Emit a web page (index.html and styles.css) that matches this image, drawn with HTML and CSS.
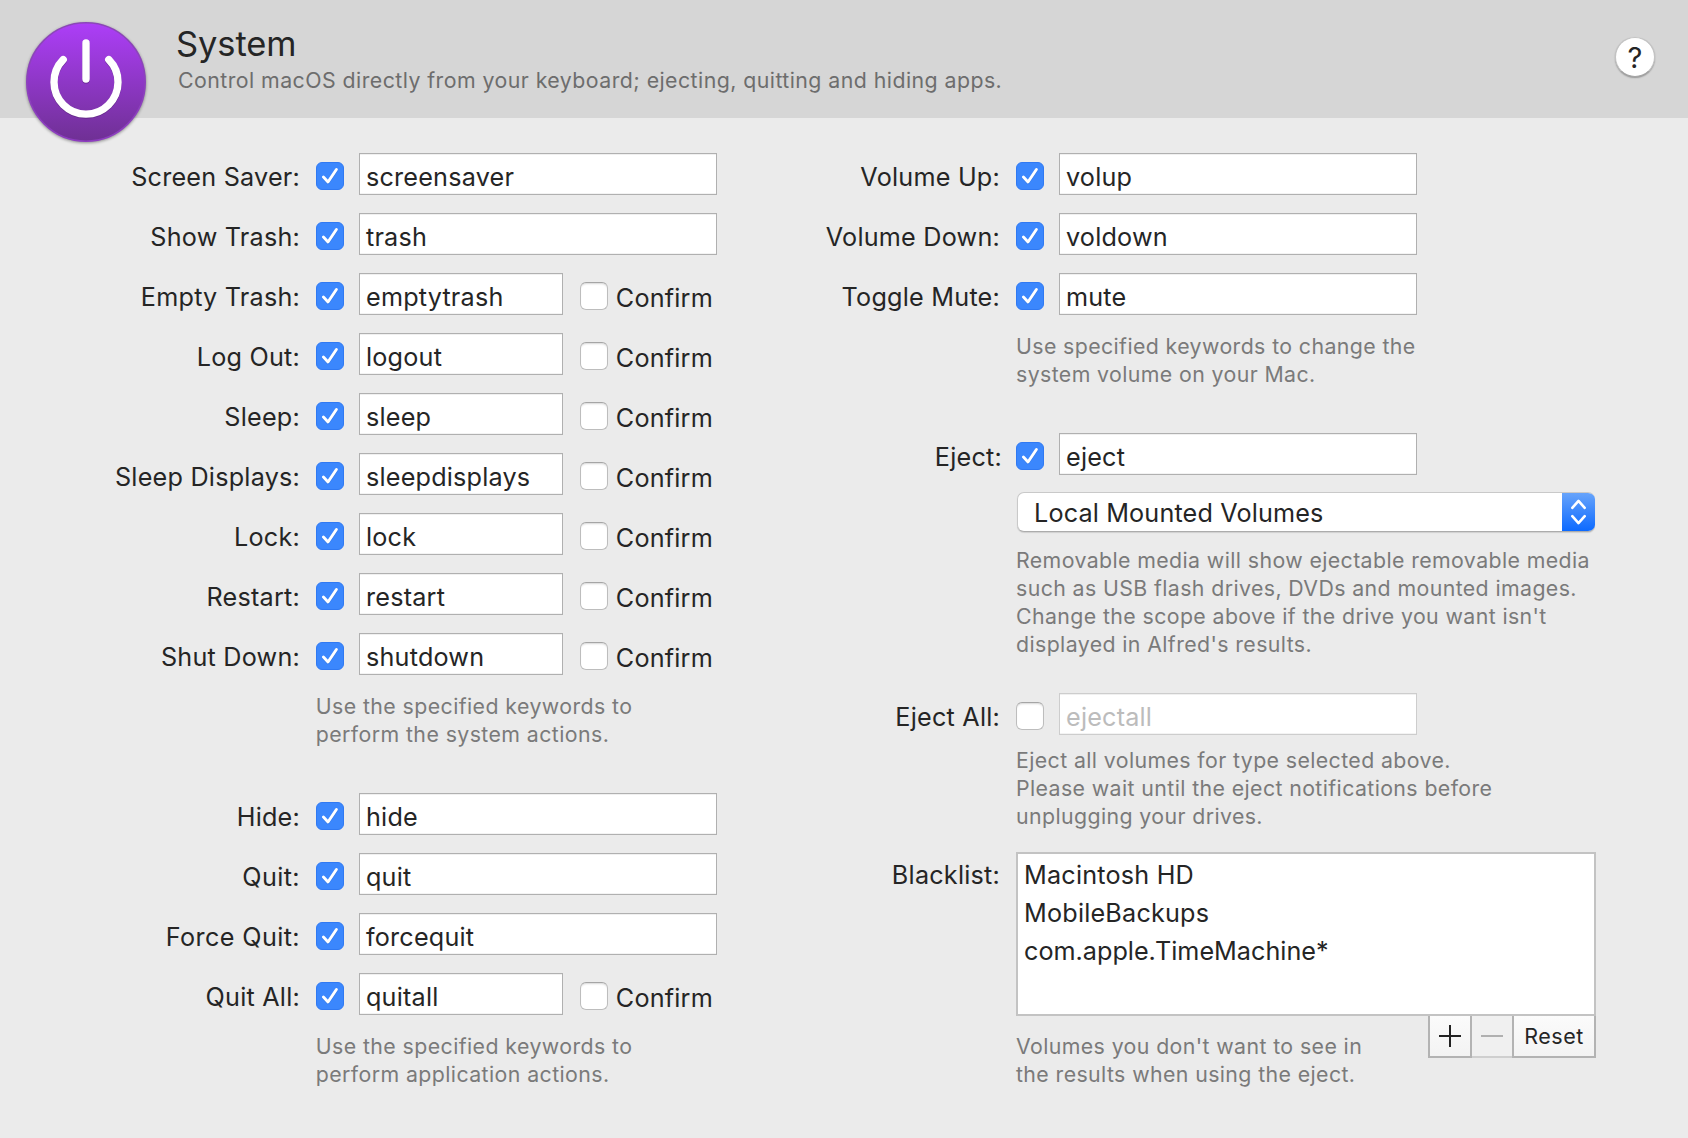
FILE: index.html
```html
<!DOCTYPE html>
<html lang="en">
<head>
<meta charset="utf-8">
<title>System</title>
<link rel="stylesheet" href="styles.css">
</head>
<body>
<svg class="defs" width="0" height="0" aria-hidden="true">
  <symbol id="tick" viewBox="0 0 28 28">
    <path d="M7.4 15.8l4.6 5L20.4 8.3" fill="none" stroke="#1c5fc4" stroke-opacity=".45" stroke-width="2.9" stroke-linecap="round" stroke-linejoin="round"/>
    <path d="M7.4 15l4.6 5L20.4 7.5" fill="none" stroke="#fff" stroke-width="2.9" stroke-linecap="round" stroke-linejoin="round"/>
  </symbol>
</svg>
<header class="header">
  <svg class="logo" width="128" height="130" viewBox="0 0 128 130">
    <defs>
      <linearGradient id="disc" x1="0" y1="0" x2="0" y2="1">
        <stop offset="0" stop-color="#ad3ef8"/>
        <stop offset="1" stop-color="#6f3094"/>
      </linearGradient>
      <linearGradient id="rim" x1="0" y1="0" x2="0" y2="1">
        <stop offset="0" stop-color="#8b46b8"/>
        <stop offset="1" stop-color="#8d3cc0"/>
      </linearGradient>
    </defs>
    <circle class="disc" cx="64" cy="64" r="59.2" fill="url(#disc)" stroke="url(#rim)" stroke-width="1.6"/>
    <g fill="none" stroke-linecap="round" stroke-width="7.4">
      <path d="M64 25.9v36M41.2 42.6a32 32 0 1 0 45.6 0" stroke="#4b1c6b" stroke-opacity=".55"/>
      <path d="M64 25v36M41.2 41.7a32 32 0 1 0 45.6 0" stroke="#fff"/>
    </g>
  </svg>
  <div class="heading">
    <h1 class="title">System</h1>
    <p class="subtitle">Control macOS directly from your keyboard; ejecting, quitting and hiding apps.</p>
  </div>
  <div class="help">?</div>
</header>
<main class="content">
  <section class="column left">
    <div class="rows">
      <div class="row"><span class="label">Screen Saver:</span><span class="check on"><svg><use href="#tick"/></svg></span><div class="field">screensaver</div></div>
      <div class="row"><span class="label">Show Trash:</span><span class="check on"><svg><use href="#tick"/></svg></span><div class="field">trash</div></div>
      <div class="row"><span class="label">Empty Trash:</span><span class="check on"><svg><use href="#tick"/></svg></span><div class="field short">emptytrash</div><span class="check"></span><span class="confirm">Confirm</span></div>
      <div class="row"><span class="label">Log Out:</span><span class="check on"><svg><use href="#tick"/></svg></span><div class="field short">logout</div><span class="check"></span><span class="confirm">Confirm</span></div>
      <div class="row"><span class="label">Sleep:</span><span class="check on"><svg><use href="#tick"/></svg></span><div class="field short">sleep</div><span class="check"></span><span class="confirm">Confirm</span></div>
      <div class="row"><span class="label">Sleep Displays:</span><span class="check on"><svg><use href="#tick"/></svg></span><div class="field short">sleepdisplays</div><span class="check"></span><span class="confirm">Confirm</span></div>
      <div class="row"><span class="label">Lock:</span><span class="check on"><svg><use href="#tick"/></svg></span><div class="field short">lock</div><span class="check"></span><span class="confirm">Confirm</span></div>
      <div class="row"><span class="label">Restart:</span><span class="check on"><svg><use href="#tick"/></svg></span><div class="field short">restart</div><span class="check"></span><span class="confirm">Confirm</span></div>
      <div class="row"><span class="label">Shut Down:</span><span class="check on"><svg><use href="#tick"/></svg></span><div class="field short">shutdown</div><span class="check"></span><span class="confirm">Confirm</span></div>
    </div>
    <p class="hint">Use the specified keywords to<br>perform the system actions.</p>
    <div class="rows spaced">
      <div class="row"><span class="label">Hide:</span><span class="check on"><svg><use href="#tick"/></svg></span><div class="field">hide</div></div>
      <div class="row"><span class="label wide">Quit:</span><span class="check on"><svg><use href="#tick"/></svg></span><div class="field">quit</div></div>
      <div class="row"><span class="label wide">Force Quit:</span><span class="check on"><svg><use href="#tick"/></svg></span><div class="field">forcequit</div></div>
      <div class="row"><span class="label">Quit All:</span><span class="check on"><svg><use href="#tick"/></svg></span><div class="field short">quitall</div><span class="check"></span><span class="confirm">Confirm</span></div>
    </div>
    <p class="hint">Use the specified keywords to<br>perform application actions.</p>
  </section>
  <section class="column right">
    <div class="rows">
      <div class="row"><span class="label">Volume Up:</span><span class="check on"><svg><use href="#tick"/></svg></span><div class="field">volup</div></div>
      <div class="row"><span class="label">Volume Down:</span><span class="check on"><svg><use href="#tick"/></svg></span><div class="field">voldown</div></div>
      <div class="row"><span class="label">Toggle Mute:</span><span class="check on"><svg><use href="#tick"/></svg></span><div class="field">mute</div></div>
    </div>
    <p class="hint">Use specified keywords to change the<br>system volume on your Mac.</p>
    <div class="rows spaced">
      <div class="row"><span class="label eject">Eject:</span><span class="check on"><svg><use href="#tick"/></svg></span><div class="field">eject</div></div>
    </div>
    <div class="select">
      <span class="choice">Local Mounted Volumes</span>
      <span class="stepper"><svg width="33" height="40" viewBox="0 0 33 40"><path d="M10.3 15.8l6.2-6.9 6.2 6.9M10.3 24.2l6.2 6.9 6.2-6.9" fill="none" stroke="#fff" stroke-width="2.6" stroke-linecap="round" stroke-linejoin="round"/></svg></span>
    </div>
    <p class="hint scope">Removable media will show ejectable removable media<br>such as USB flash drives, DVDs and mounted images.<br>Change the scope above if the drive you want isn't<br>displayed in Alfred's results.</p>
    <div class="rows all">
      <div class="row"><span class="label">Eject All:</span><span class="check"></span><div class="field disabled">ejectall</div></div>
    </div>
    <p class="hint tight">Eject all volumes for type selected above.<br>Please wait until the eject notifications before<br>unplugging your drives.</p>
    <div class="blacklist">
      <span class="label">Blacklist:</span>
      <ul class="list"><li>Macintosh HD</li><li>MobileBackups</li><li class="dense">com.apple.TimeMachine*</li></ul>
    </div>
    <div class="footer">
      <p class="hint">Volumes you don't want to see in<br>the results when using the eject.</p>
      <div class="buttons">
        <span class="button add"><svg width="22" height="22" viewBox="0 0 22 22"><path d="M0 11h22M11 0v22" stroke="#222" stroke-width="2"/></svg></span>
        <span class="button remove"><svg width="22" height="22" viewBox="0 0 22 22"><path d="M0 11h22" stroke="#b0b0b0" stroke-width="2"/></svg></span>
        <span class="button reset">Reset</span>
      </div>
    </div>
  </section>
</main>
</body>
</html>
```
FILE: styles.css
```css
* { box-sizing: border-box; }
body {
  margin: 0;
  width: 1688px;
  height: 1138px;
  overflow: hidden;
  background: #ebebeb;
  color: #252525;
  font: 25.2px/48px Inter, "Liberation Sans", sans-serif;
  letter-spacing: 0.2px;
  white-space: nowrap;
}
h1, p, ul { margin: 0; padding: 0; font-weight: 400; }
.defs { position: absolute; }

.header {
  position: relative;
  display: flex;
  justify-content: space-between;
  height: 118px;
  padding: 22px 33px 0 176px;
  background: #d6d6d6;
}
.logo { position: absolute; left: 22px; top: 18px; }
.disc { filter: drop-shadow(0 1.5px 1.5px rgba(0, 0, 0, .4)); }
.title { font-size: 34.5px; line-height: 43px; letter-spacing: -0.1px; }
.subtitle {
  margin: 1px 0 0 2px;
  font-size: 21.3px;
  line-height: 28px;
  letter-spacing: 0.455px;
  color: #6d6d6d;
}
.help {
  width: 40px;
  height: 40px;
  margin-top: 15px;
  border-radius: 50%;
  border: 1px solid #c3c3c3;
  border-bottom-color: #a5a5a5;
  background: #fff;
  box-shadow: 0 1px 1.5px rgba(0, 0, 0, .3);
  text-align: center;
  font-size: 29px;
  line-height: 39px;
}

.content { display: flex; padding-top: 35px; }
.column { display: flex; flex-direction: column; }
.left { width: 800px; }
.right { width: 888px; }
.rows { display: flex; flex-direction: column; gap: 18px; }
.spaced { margin-top: 45px; }
.all { margin-top: 35px; }
.row { display: flex; align-items: flex-start; height: 42px; }
.label { flex: none; padding-right: 1px; text-align: right; letter-spacing: 0.22px; }
.label.wide { letter-spacing: 0.38px; }
.left .label { width: 301px; }
.right .label { width: 201px; }
.right .label.eject { width: 203px; margin-right: -2px; }
.check {
  flex: none;
  width: 28px;
  height: 28px;
  margin: 9px 0 0 15px;
  border: 1px solid #bdbdbd;
  border-top-color: #a5a5a5;
  border-radius: 6px;
  background: #fff;
  box-shadow: inset 0 2px 2px -1px rgba(0, 0, 0, .16);
}
.check.on {
  border: 1px solid #3079f2;
  background: #3b87fd;
  box-shadow: none;
}
.check svg { display: block; width: 28px; height: 28px; margin: -1px; }
.field {
  flex: none;
  width: 358px;
  height: 42px;
  margin-left: 15px;
  padding-left: 6px;
  border: 1px solid #b0b0b0;
  background: #fff;
  box-shadow: inset 0 1px 0 #f0f0f0, inset 0 -1px 0 #f3f3f3;
  line-height: 46px;
}
.short { width: 204px; }
.short + .check { margin-left: 17px; }
.confirm { margin: 1px 0 0 7.8px; }
.disabled { border-color: #cdcdcd; color: #bcbcbc; }

.hint {
  margin: 17px 0 0 315.8px;
  font-size: 21.3px;
  line-height: 28px;
  letter-spacing: 0.42px;
  color: #7a7a7a;
}
.right .hint { margin-left: 216px; letter-spacing: 0.4px; }
.right .scope { margin-top: 14px; }
.right .tight { margin-top: 11px; }

.select {
  display: flex;
  justify-content: space-between;
  width: 578px;
  height: 40px;
  margin: 17px 0 0 217px;
  border-radius: 7px;
  overflow: hidden;
  background: #fff;
  border: 1px solid #c9c9c9;
  border-bottom-color: #acacac;
  border-right: 0;
  box-shadow: 0 1px 1px rgba(0, 0, 0, .12);
}
.choice { margin-left: 16px; line-height: 41px; letter-spacing: 0.15px; }
.stepper {
  width: 33px;
  height: 40px;
  margin-top: -1px;
  flex: none;
  background: linear-gradient(#69a5fb, #0a68ff);
}
.stepper svg { display: block; }

.blacklist { display: flex; margin-top: 22px; }
.blacklist .label { line-height: 46px; }
.list {
  width: 580px;
  height: 164px;
  margin-left: 15px;
  padding: 2px 0 0 6px;
  border: 2px solid #c3c3c3;
  background: #fff;
  list-style: none;
  line-height: 38px;
}
.dense { letter-spacing: 0; }
.footer { display: flex; justify-content: space-between; width: 796px; }
.footer .hint { margin-top: 16px; }
.buttons { display: flex; height: 42px; }
.button {
  display: flex;
  align-items: center;
  justify-content: center;
  height: 42px;
  border: 2px solid #b3b3b3;
  border-top: 0;
  background: linear-gradient(#fbfbfb, #f3f3f3);
}
.add { width: 44px; }
.remove { width: 40px; background: #f0f0f0; border-width: 0 0 2px; border-color: #cfcfcf; }
.reset { width: 84px; font-size: 21.5px; letter-spacing: 0.5px; line-height: 40px; }
```
